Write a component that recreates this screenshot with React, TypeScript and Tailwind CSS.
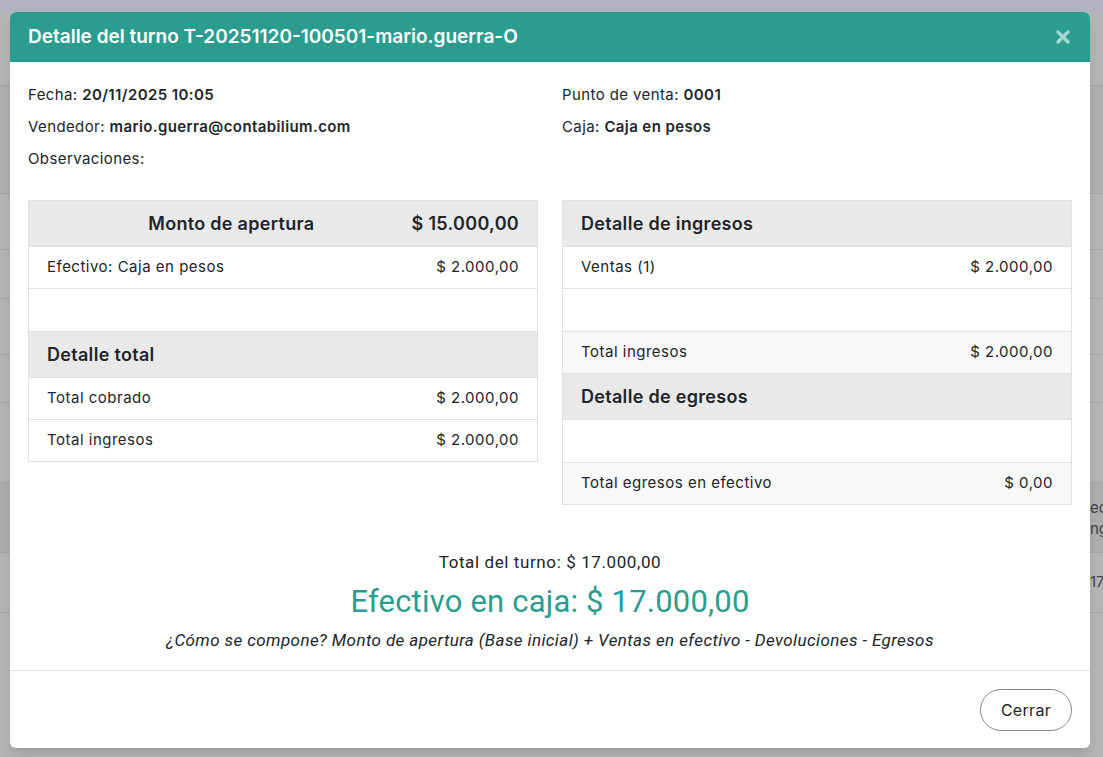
import React from 'react';
import { X } from 'lucide-react';

const font = { fontFamily: 'Inter, "Open Sans", sans-serif' };

interface Row {
  label?: string;
  value?: string;
  kind: 'head' | 'row' | 'empty' | 'total';
}

const left: Row[] = [
  { label: 'Efectivo: Caja en pesos', value: '$ 2.000,00', kind: 'row' },
  { kind: 'empty' },
  { label: 'Detalle total', kind: 'head' },
  { label: 'Total cobrado', value: '$ 2.000,00', kind: 'row' },
  { label: 'Total ingresos', value: '$ 2.000,00', kind: 'row' },
];

const right: Row[] = [
  { label: 'Detalle de ingresos', kind: 'head' },
  { label: 'Ventas (1)', value: '$ 2.000,00', kind: 'row' },
  { kind: 'empty' },
  { label: 'Total ingresos', value: '$ 2.000,00', kind: 'total' },
  { label: 'Detalle de egresos', kind: 'head' },
  { kind: 'empty' },
  { label: 'Total egresos en efectivo', value: '$ 0,00', kind: 'total' },
];

const TableRow = ({ row }: { row: Row }) => {
  if (row.kind === 'head') {
    return (
      <div className="h-[46px] flex items-center px-[18px] bg-[#e9e9e9] border-t border-[#dee2e6] text-[18px] tracking-[0.3px] font-semibold text-[#212529]">
        {row.label}
      </div>
    );
  }
  if (row.kind === 'empty') {
    return <div className="h-[43px] border-t border-[#dee2e6]" />;
  }
  return (
    <div
      className={`h-[42px] flex items-center justify-between px-[18px] border-t border-[#dee2e6] text-[15px] tracking-[0.5px] text-[#212529] ${
        row.kind === 'total' ? 'bg-[#f8f8f8]' : 'bg-white'
      }`}
    >
      <span>{row.label}</span>
      <span>{row.value}</span>
    </div>
  );
};

const Background = () => (
  <div className="h-[757px] bg-[#b4b4b4] flex flex-col text-[15px] text-[#444]">
    <div className="h-[12px] bg-[#b2b1c2]" />
    <div className="h-[73px]" />
    <div className="h-[108px] bg-[#afafaf] border-t border-[#a4a4a4]" />
    <div className="h-[56px] border-t border-[#a4a4a4]" />
    <div className="h-[49px] border-t border-[#a4a4a4]" />
    <div className="h-[56px] border-t border-[#a4a4a4]" />
    <div className="h-[48px] border-t border-[#a4a4a4]" />
    <div className="h-[80px] border-t border-[#a4a4a4]" />
    <div className="h-[70px] bg-[#adadad] border-t border-[#a4a4a4] flex justify-end items-start pt-[14px]">
      <div className="w-[13px] overflow-hidden whitespace-nowrap leading-[21px]">
        <div>ec</div>
        <div>ng</div>
      </div>
    </div>
    <div className="h-[60px] border-t border-[#a4a4a4] flex justify-end items-center">
      <span className="w-[13px] overflow-hidden whitespace-nowrap">17.</span>
    </div>
    <div className="flex-1 border-t border-[#a4a4a4]" />
  </div>
);

export default function App() {
  return (
    <div className="relative w-[1103px] h-[757px] overflow-hidden" style={font}>
      <Background />

      {/* Modal */}
      <div className="absolute left-[10px] top-[12px] w-[1080px] h-[736px] bg-white rounded-[6px] overflow-hidden flex flex-col shadow-lg">
        <div className="h-[50px] bg-[#2a9d8f] flex items-center justify-between pl-[18px] pr-[17px]">
          <h2 className="text-white text-[19px] font-semibold">
            Detalle del turno T-20251120-100501-mario.guerra-O
          </h2>
          <X size={20} strokeWidth={4} className="text-[#a6dbd4]" />
        </div>

        <div className="flex-1 px-[18px] pt-[23px] text-[#212529]">
          <div className="grid grid-cols-2 gap-x-[24px] text-[15px] tracking-[0.4px]">
            <div className="flex flex-col gap-y-[12px]">
              <p className="leading-[20px]">Fecha: <b className="font-semibold">20/11/2025 10:05</b></p>
              <p className="leading-[20px]">Vendedor: <b className="font-semibold">mario.guerra@contabilium.com</b></p>
              <p className="leading-[20px]">Observaciones:</p>
            </div>
            <div className="flex flex-col gap-y-[12px]">
              <p className="leading-[20px]">Punto de venta: <b className="font-semibold">0001</b></p>
              <p className="leading-[20px]">Caja: <b className="font-semibold">Caja en pesos</b></p>
            </div>
          </div>

          <div className="grid grid-cols-2 gap-x-[24px] items-start mt-[31px]">
            <div className="border border-[#dee2e6] border-t-0">
              <div className="h-[46px] flex items-center bg-[#e9e9e9] border-t border-[#dee2e6] text-[18px] tracking-[0.3px] font-semibold">
                <span className="flex-1 text-center pl-[22px]">Monto de apertura</span>
                <span className="whitespace-nowrap pr-[18px]">$ 15.000,00</span>
              </div>
              {left.map((r, i) => (
                <TableRow key={i} row={r} />
              ))}
            </div>
            <div className="border border-[#dee2e6] border-t-0">
              {right.map((r, i) => (
                <TableRow key={i} row={r} />
              ))}
            </div>
          </div>

          <div className="flex flex-col items-center mt-[47px]" style={{ fontFamily: 'Roboto, sans-serif' }}>
            <p className="text-[17px] tracking-[0.6px] leading-[20px]">Total del turno: $ 17.000,00</p>
            <p className="text-[31px] tracking-[0.2px] leading-[36px] text-[#2a9d8f] mt-[12px]">Efectivo en caja: $ 17.000,00</p>
            <p className="text-[17px] tracking-[0.4px] italic leading-[20px] mt-[10px]">
              ¿Cómo se compone? Monto de apertura (Base inicial) + Ventas en efectivo - Devoluciones - Egresos
            </p>
          </div>
        </div>

        <div className="h-[78px] border-t border-[#dee2e6] flex items-start justify-end pr-[18px] pt-[18px]">
          <button className="h-[42px] px-[20px] rounded-full border border-[#8a8a8a] text-[16px] tracking-[0.3px] text-[#212529] bg-white">
            Cerrar
          </button>
        </div>
      </div>
    </div>
  );
}
